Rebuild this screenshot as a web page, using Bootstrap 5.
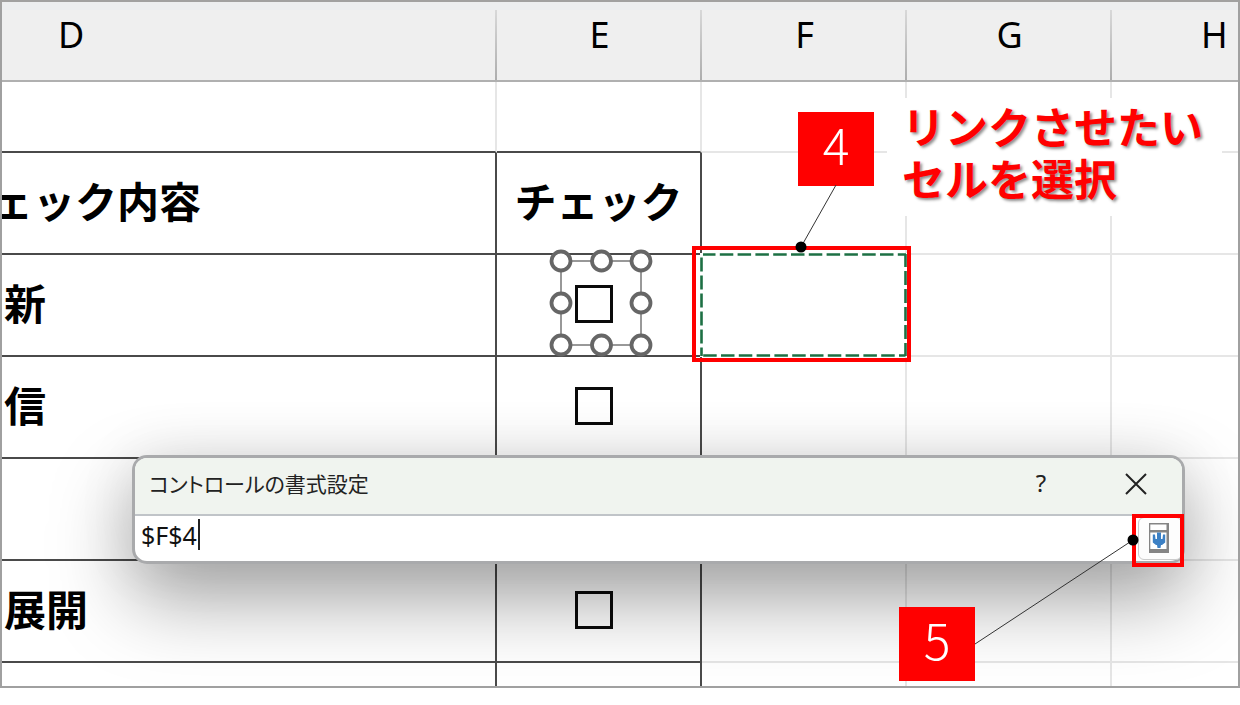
<!DOCTYPE html>
<html lang="ja">
<head>
<meta charset="utf-8">
<meta name="viewport" content="width=device-width, initial-scale=1">
<title>コントロールの書式設定</title>
<link rel="stylesheet" href="https://cdn.jsdelivr.net/npm/bootstrap@5.3.0/dist/css/bootstrap.min.css">
<style>
  body { font-family: "Noto Sans", "Noto Sans CJK JP", sans-serif; color: #000; background: #fff; }
  .sheet { border: 2px solid #a0a0a0; }
  .grid { table-layout: fixed; border-collapse: separate; border-spacing: 0; }
  .grid th, .grid td { padding: 0; border: 0 solid #e6e6e6; border-width: 0 2px 2px 0; vertical-align: middle; position: relative; }
  .grid .col-n { width: 205px; }
  .grid .col-last { width: 126px; }
  .grid tr > :last-child { border-right-width: 0; }
  .grid thead th { height: 80px; font-size: 36px; line-height: 38px; font-weight: 400; vertical-align: top; padding: 14px 0 0; text-align: center;
    border-right: 0; border-bottom-color: #b0b0b0;
    background: linear-gradient(#d8d8d8, #a8a8a8) right 8px / 2px 100% no-repeat, linear-gradient(#ebedef 8px, #efefef 8px); }
  .grid thead th:last-child { background: linear-gradient(#ebedef 8px, #efefef 8px); text-align: left; padding-left: 89px; }
  .grid thead th:first-child { text-align: left; padding-left: 56px; }
  .row-gap td { height: 71px; }
  .row-item > * { height: 102px; }
  .row-end td { height: 23px; border-bottom: 0; }
  .grid .ink { border-color: #4a4a4a; }
  .grid .ink-b { border-bottom-color: #4a4a4a; }
  .grid .ink-r { border-right-color: #4a4a4a; }
  .label-text { font: 700 42px/60px "Noto Sans CJK JP", sans-serif; white-space: nowrap; padding: 0 2px 6px; }
  .clipped { overflow: hidden; }
  .clipped .label-text { margin-left: -55px; }
  .tick { appearance: none; width: 38px; height: 38px; border: 3px solid #0a0a0a; border-radius: 0; background: #fff; margin: 0 9px 2px 0; display: block; }
  .handles { left: 48px; top: -10px; z-index: 2; }
  .target-frame { left: -10px; right: -6px; top: -9px; bottom: -7px; border: 4px solid #f00; z-index: 2; }
  .marquee { left: -2px; top: -2px; z-index: 2; }
  .callout { left: 96px; top: -55px; width: 424px; gap: 13px; z-index: 3; }
  .step { width: 76px; height: 74px; background: #f00; color: #fff; font: 300 50px/62px "Noto Sans CJK JP", sans-serif; text-align: center; }
  .callout .step { margin-top: 14px; }
  .callout-text { color: #f00; font: 700 43px/52px "Noto Sans CJK JP", sans-serif; text-shadow: 2px 2px 3px rgba(0,0,0,.45); padding: 1px 0 13px 15px; background: #fff; text-align: left; }
  .leader-a { left: 90px; top: 32px; z-index: 3; }
  .dlg { left: 130px; right: 53px; top: 453px; border: 3px solid #a9aaac; border-radius: 15px; z-index: 5; background: #fff;
    box-shadow: 0 35px 80px rgba(0,0,0,.36), 0 0 60px rgba(0,0,0,.08); }
  .dlg-head { height: 58px; background: #f0f4ef; border-bottom: 2px solid #c0c4c8; border-radius: 12px 12px 0 0; }
  .dlg-title { font: 400 21px/32px "Noto Sans CJK JP", sans-serif; font-feature-settings: "palt"; color: #222; padding: 0 0 6px 14px; }
  .dlg-head button { border: 0; background: none; height: 56px; padding: 0 0 6px; color: #222; font-size: 24px; }
  .dlg-head .btn-shut { padding-bottom: 10px; }
  .btn-help { width: 98px; }
  .btn-shut { width: 92px; }
  .dlg-body { height: 45px; }
  .ref-input { border: 0; outline: 0; font-size: 25px; line-height: 36px; padding: 0 0 8px 6px; color: #111; background: none; border-radius: 0 0 0 12px; }
  .caret { left: 63px; top: 3px; width: 2px; height: 31px; background: #222; }
  .btn-pick { width: 44px; margin: 1px 0; padding: 0 3px 2px 0; border: 1px solid #ccc; border-radius: 6px; background: #fdfdfd; }
  .pick-frame { right: -2px; top: 56px; width: 52px; height: 53px; border: 4px solid #f00; }
  .step-b { right: 207px; top: 149px; }
  .leader-b { right: 43px; top: 76px; }
</style>
</head>
<body>
<main class="sheet position-relative overflow-hidden">
  <table class="grid w-100">
    <colgroup><col><col class="col-n"><col class="col-n"><col class="col-n"><col class="col-last"></colgroup>
    <thead>
      <tr><th scope="col">D</th><th scope="col">E</th><th scope="col">F</th><th scope="col">G</th><th scope="col">H</th></tr>
    </thead>
    <tbody>
      <tr class="row-gap"><td class="ink-b"></td><td class="ink-b"></td><td></td><td></td><td></td></tr>
      <tr class="row-item">
        <th class="ink clipped"><div class="label-text">チェック内容</div></th>
        <th class="ink text-center"><div class="label-text">チェック</div></th>
        <td>
          <div class="callout position-absolute d-flex align-items-start">
            <div class="step flex-shrink-0">4</div>
            <div class="callout-text flex-grow-1">リンクさせたい<br>セルを選択</div>
          </div>
          <svg class="leader-a position-absolute" width="56" height="70" aria-hidden="true"><path d="M44 0 9 62" stroke="#333" fill="none"/><circle cx="9" cy="62" r="5.5"/></svg>
        </td><td></td><td></td>
      </tr>
      <tr class="row-item">
        <td class="ink"><div class="label-text">新</div></td>
        <td class="ink">
          <div class="d-flex justify-content-center"><input type="checkbox" class="tick" aria-label="新"></div>
          <svg class="handles position-absolute" width="112" height="116" aria-hidden="true">
            <rect x="16" y="16" width="80" height="84" fill="none" stroke="#777" stroke-width="1.5"/>
            <g fill="#fff" stroke="#666" stroke-width="3.8"><circle cx="16" cy="16" r="9.5"/><circle cx="56.5" cy="16" r="9.5"/><circle cx="96" cy="16" r="9.5"/><circle cx="16" cy="58" r="9.5"/><circle cx="96" cy="58" r="9.5"/><circle cx="16" cy="100" r="9.5"/><circle cx="56.5" cy="100" r="9.5"/><circle cx="96" cy="100" r="9.5"/></g>
          </svg>
        </td>
        <td>
          <svg class="marquee position-absolute" width="207" height="104" aria-hidden="true">
            <rect x="1.5" y="1.5" width="204" height="101" fill="none" stroke="#fff" stroke-width="3"/>
            <g stroke="#1d7044" stroke-width="2.6" fill="none"><path d="M3 1.5H206" stroke-dasharray="13.5 4.3" stroke-dashoffset="1"/><path d="M205.5 1V103" stroke-dasharray="14 4" stroke-dashoffset="1"/><path d="M205.5 102.5H1" stroke-dasharray="13.5 4.3" stroke-dashoffset="7"/><path d="M1.5 4.5V103" stroke-dasharray="14 4"/></g>
          </svg>
          <div class="target-frame position-absolute"></div>
        </td><td></td><td></td>
      </tr>
      <tr class="row-item">
        <td class="ink"><div class="label-text">信</div></td>
        <td class="ink"><div class="d-flex justify-content-center"><input type="checkbox" class="tick" aria-label="信"></div></td>
        <td></td><td></td><td></td>
      </tr>
      <tr class="row-item"><td class="ink"></td><td class="ink"></td><td></td><td></td><td></td></tr>
      <tr class="row-item">
        <td class="ink"><div class="label-text">展開</div></td>
        <td class="ink"><div class="d-flex justify-content-center"><input type="checkbox" class="tick" aria-label="展開"></div></td>
        <td></td><td></td><td></td>
      </tr>
      <tr class="row-end"><td class="ink-r"></td><td class="ink-r"></td><td></td><td></td><td></td></tr>
    </tbody>
  </table>

  <section class="dlg position-absolute" role="dialog" aria-labelledby="dlg-title">
    <div class="dlg-head d-flex align-items-center">
      <div class="dlg-title flex-grow-1" id="dlg-title">コントロールの書式設定</div>
      <button type="button" class="btn-help">?</button>
      <button type="button" class="btn-shut" aria-label="閉じる"><svg width="22" height="22" viewBox="0 0 22 22" aria-hidden="true"><path d="M1 1 21 21M21 1 1 21" stroke="#222" stroke-width="2" fill="none"/></svg></button>
    </div>
    <div class="dlg-body d-flex align-items-stretch position-relative">
      <input class="ref-input flex-grow-1" type="text" value="$F$4" aria-labelledby="dlg-title">
      <span class="caret position-absolute"></span>
      <button type="button" class="btn-pick d-flex align-items-center justify-content-center" aria-label="セル範囲">
        <svg width="20" height="30" viewBox="0 0 20 30" aria-hidden="true"><rect width="20" height="30" fill="#858585"/><path d="M1.3 1.500H17.500V7H1.300zM1.300 9.500H17.500V26H1.300z" fill="#fff"/><path d="M8 9.500h4V16h1.500l.5-4.500h2.200V19.500L13 22h-1l-.5 3h-3L8 22H7L3.800 19.500V11.500H6l.500 4.500H8z" fill="#3c80c4"/></svg>
      </button>
    </div>
    <div class="pick-frame position-absolute"></div>
    <svg class="leader-b position-absolute" width="164" height="112" aria-hidden="true"><path d="M0 110 158 6" stroke="#333" fill="none"/><circle cx="158" cy="6" r="5.5"/></svg>
    <div class="step step-b position-absolute">5</div>
  </section>
</main>
<script src="https://cdn.jsdelivr.net/npm/bootstrap@5.3.0/dist/js/bootstrap.bundle.min.js"></script>
</body>
</html>
